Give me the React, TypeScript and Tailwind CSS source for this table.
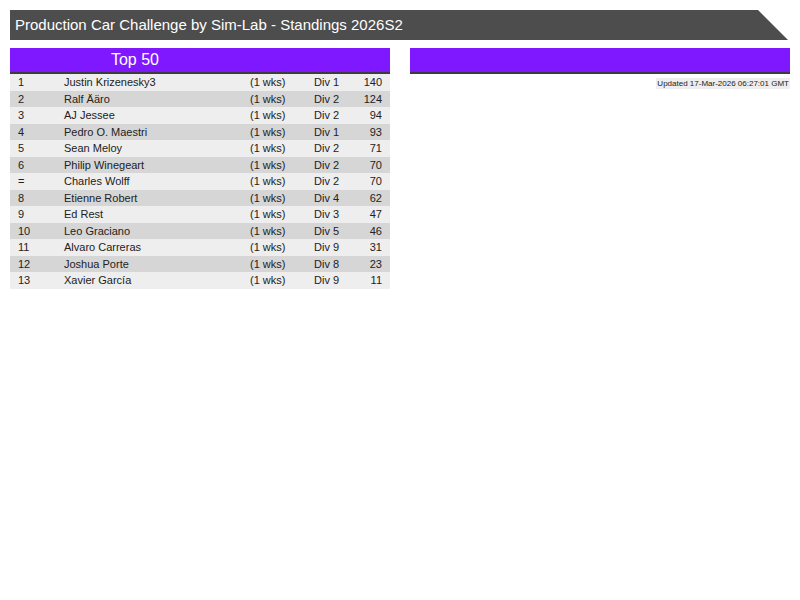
import React from "react";

const rows: [string, string, string, number][] = [
  ["1", "Justin Krizenesky3", "Div 1", 140],
  ["2", "Ralf Ääro", "Div 2", 124],
  ["3", "AJ Jessee", "Div 2", 94],
  ["4", "Pedro O. Maestri", "Div 1", 93],
  ["5", "Sean Meloy", "Div 2", 71],
  ["6", "Philip Winegeart", "Div 2", 70],
  ["=", "Charles Wolff", "Div 2", 70],
  ["8", "Etienne Robert", "Div 4", 62],
  ["9", "Ed Rest", "Div 3", 47],
  ["10", "Leo Graciano", "Div 5", 46],
  ["11", "Alvaro Carreras", "Div 9", 31],
  ["12", "Joshua Porte", "Div 8", 23],
  ["13", "Xavier García", "Div 9", 11],
];

export default function App() {
  return (
    <div className="w-[800px] h-[600px] bg-white pt-[10px] px-[10px]" style={{ fontFamily: '"Liberation Sans", Arial, sans-serif' }}>
      <div className="h-[30px] w-[778px] bg-[#4d4d4d] text-white text-[15px] flex items-center pl-[5px] [clip-path:polygon(0_0,calc(100%-30px)_0,100%_100%,0_100%)]">
        Production Car Challenge by Sim-Lab - Standings 2026S2
      </div>
      <div className="flex gap-[20px] mt-[8px]">
        <div className="w-[380px]">
          <div className="h-[26px] bg-[#7f17ff] border-b-2 border-[#3c3c3c] text-white text-[16px] flex items-center">
            <span className="w-[250px] text-center">Top 50</span>
          </div>
          <div className="text-[11px] text-[#222]">
            {rows.map((r, i) => (
              <div key={i} className={`h-[16.5px] flex items-center ${i % 2 === 0 ? "bg-[#eeeeee]" : "bg-[#d6d6d6]"}`}>
                <span className="w-[54px] pl-[8px]">{r[0]}</span>
                <span className="w-[186px]">{r[1]}</span>
                <span className="w-[64px]">(1 wks)</span>
                <span className="w-[40px]">{r[2]}</span>
                <span className="w-[28px] text-right">{r[3]}</span>
              </div>
            ))}
          </div>
        </div>
        <div className="w-[380px]">
          <div className="h-[26px] bg-[#7f17ff] border-b-2 border-[#3c3c3c]" />
          <div className="flex justify-end mt-[4px]">
            <span className="text-[8px] leading-[11px] bg-[#eeeeee] text-[#222] px-[1px]">Updated 17-Mar-2026 06:27:01 GMT</span>
          </div>
        </div>
      </div>
    </div>
  );
}
